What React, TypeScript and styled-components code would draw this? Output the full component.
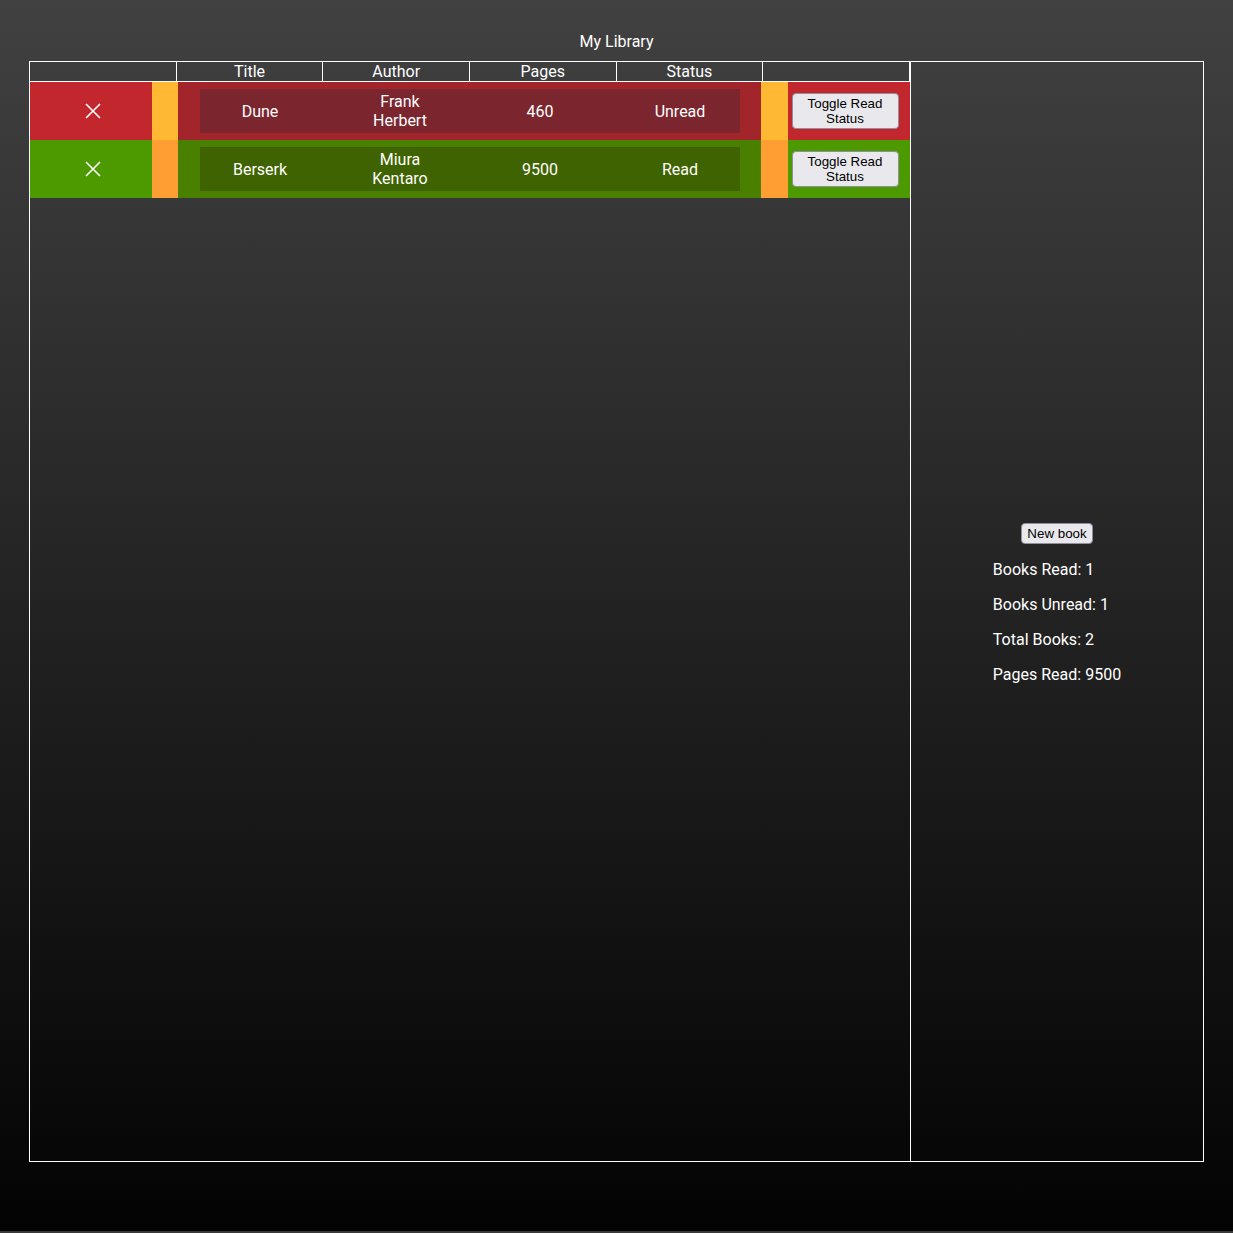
import styled, { createGlobalStyle } from "styled-components";

type Book = {
  title: string;
  author: string;
  pages: number;
  read: boolean;
};

const books: Book[] = [
  { title: "Dune", author: "Frank Herbert", pages: 460, read: false },
  { title: "Berserk", author: "Miura Kentaro", pages: 9500, read: true },
];

const columns = ["", "Title", "Author", "Pages", "Status", ""];

// colours per read state: row, side strips, card, inner box
const palette = {
  unread: { row: "#c1272d", strip: "#ffb833", card: "#a3252c", inner: "#7b262e" },
  read: { row: "#4c9900", strip: "#ff9e33", card: "#4a8000", inner: "#3f6300" },
};

const Cross = () => (
  <svg width="16" height="16" viewBox="0 0 16 16">
    <path d="M1 1 L15 15 M15 1 L1 15" stroke="#fff" strokeWidth="1.6" fill="none" />
  </svg>
);

export default function App() {
  const readCount = books.filter((b) => b.read).length;
  const pagesRead = books.filter((b) => b.read).reduce((s, b) => s + b.pages, 0);

  return (
    <>
      <GlobalStyle />
      <Page>
        <Heading>My Library</Heading>
        <Frame>
          <Library>
            <HeaderRow>
              {columns.map((c, i) => (
                <HeaderCell key={i}>{c}</HeaderCell>
              ))}
            </HeaderRow>
            {books.map((book) => {
              const tone = book.read ? palette.read : palette.unread;
              return (
                <BookRow key={book.title} $bg={tone.row}>
                  <DeleteCell>
                    <Cross />
                  </DeleteCell>
                  <BookCard $strip={tone.strip} $bg={tone.card}>
                    <BookInfo $bg={tone.inner}>
                      <InfoCell>{book.title}</InfoCell>
                      <InfoCell>
                        <Narrow>{book.author}</Narrow>
                      </InfoCell>
                      <InfoCell>{book.pages}</InfoCell>
                      <InfoCell>{book.read ? "Read" : "Unread"}</InfoCell>
                    </BookInfo>
                  </BookCard>
                  <ToggleCell>
                    <ToggleButton>Toggle Read Status</ToggleButton>
                  </ToggleCell>
                </BookRow>
              );
            })}
          </Library>
          <Sidebar>
            <NewButton>New book</NewButton>
            <Stats>
              <Stat>Books Read: {readCount}</Stat>
              <Stat>Books Unread: {books.length - readCount}</Stat>
              <Stat>Total Books: {books.length}</Stat>
              <Stat>Pages Read: {pagesRead}</Stat>
            </Stats>
          </Sidebar>
        </Frame>
      </Page>
    </>
  );
}

const GlobalStyle = createGlobalStyle`
  html, body {
    margin: 0;
    background: #3a3a3a;
  }
  body {
    font-family: Roboto, "Liberation Sans", sans-serif;
    color: #fff;
  }
`;

const Page = styled.div`
  height: 1231px;
  box-sizing: border-box;
  padding: 32px 29px 0;
  background: linear-gradient(#414141, #030303);
  display: flex;
  flex-direction: column;
`;

const Heading = styled.div`
  text-align: center;
  font-size: 16px;
  line-height: 19px;
  margin-bottom: 10px;
`;

const Frame = styled.div`
  height: 1099px;
  border: 1px solid #fff;
  display: grid;
  grid-template-columns: 880px 1fr;
`;

const Library = styled.div`
  display: flex;
  flex-direction: column;
`;

const HeaderRow = styled.div`
  display: grid;
  grid-template-columns: repeat(6, 1fr);
  border-bottom: 1px solid #fff;
`;

const HeaderCell = styled.div`
  height: 19px;
  line-height: 19px;
  font-size: 16px;
  text-align: center;
  border-right: 1px solid #fff;
`;

const BookRow = styled.div<{ $bg: string }>`
  display: grid;
  grid-template-columns: 122px 1fr 122px;
  height: 58px;
  background: ${({ $bg }) => $bg};
`;

const DeleteCell = styled.div`
  display: flex;
  align-items: center;
  justify-content: center;
  padding-left: 4px;
`;

const BookCard = styled.div<{ $strip: string; $bg: string }>`
  display: flex;
  align-items: center;
  padding: 0 21px 0 22px;
  border-left: 26px solid ${({ $strip }) => $strip};
  border-right: 27px solid ${({ $strip }) => $strip};
  background: ${({ $bg }) => $bg};
`;

const BookInfo = styled.div<{ $bg: string }>`
  flex: 1;
  height: 44px;
  display: flex;
  align-items: center;
  justify-content: space-between;
  background: ${({ $bg }) => $bg};
`;

const InfoCell = styled.div`
  width: 120px;
  display: flex;
  justify-content: center;
  text-align: center;
  font-size: 16px;
  line-height: 19px;
`;

const Narrow = styled.span`
  max-width: 70px;
`;

const ToggleCell = styled.div`
  display: flex;
  align-items: center;
  justify-content: center;
  padding-right: 8px;
`;

const ToggleButton = styled.button`
  width: 107px;
  padding: 2px 6px;
  font-family: "Liberation Sans", Arial, sans-serif;
  font-size: 13.33px;
  line-height: 15px;
  color: #000;
  background: #e9e9ed;
  border: 1px solid #8f8f9d;
  border-radius: 4px;
`;

const Sidebar = styled.div`
  border-left: 1px solid #fff;
  display: flex;
  flex-direction: column;
  align-items: center;
  justify-content: center;
`;

const NewButton = styled.button`
  padding: 2px 5px;
  font-family: "Liberation Sans", Arial, sans-serif;
  font-size: 13.33px;
  line-height: 15px;
  color: #000;
  background: #e9e9ed;
  border: 1px solid #8f8f9d;
  border-radius: 4px;
`;

const Stats = styled.div`
  display: flow-root;
`;

const Stat = styled.p`
  margin: 16px 0;
  font-size: 16px;
  line-height: 19px;
`;
